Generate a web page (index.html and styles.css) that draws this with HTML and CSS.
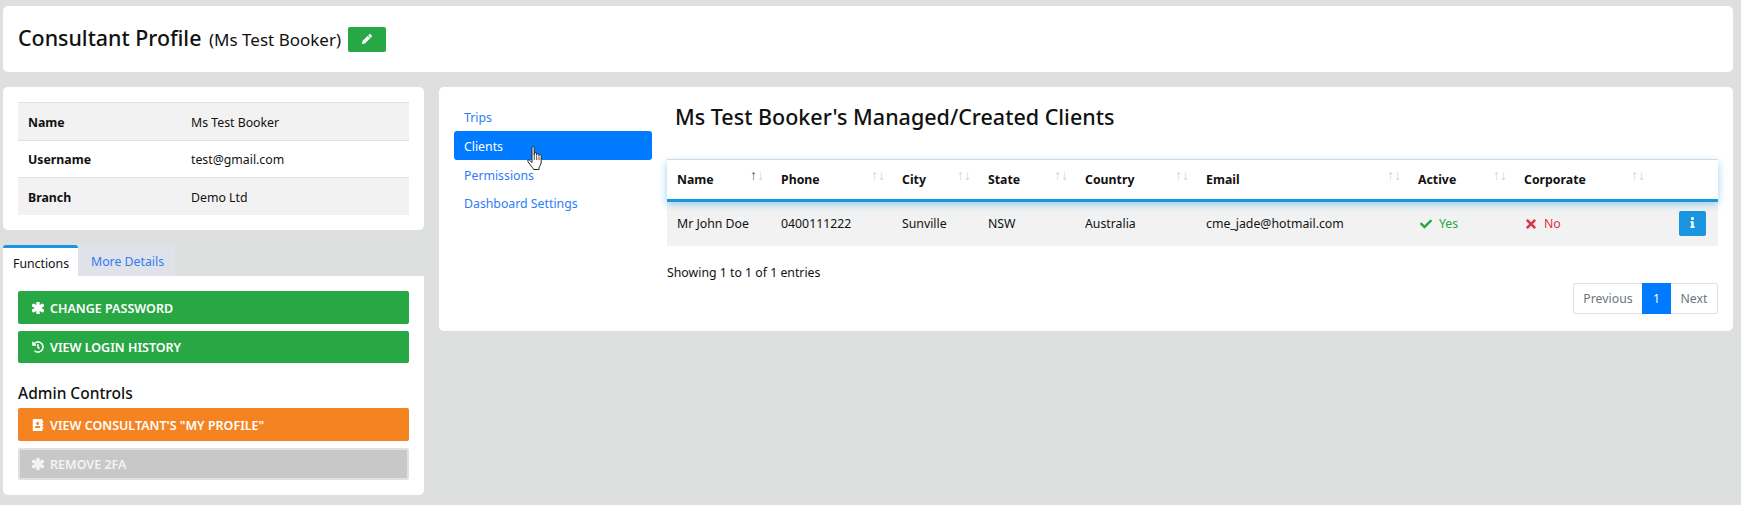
FILE: index.html
```html
<!DOCTYPE html>
<html lang="en">
<head>
<meta charset="utf-8">
<title>Consultant Profile</title>
<link rel="stylesheet" href="styles.css">
</head>
<body>
<svg class="defs" width="0" height="0" aria-hidden="true">
  <symbol id="i-asterisk" viewBox="0 0 512 512"><path d="M478.21 334.093L336 256l142.21-78.093c11.795-6.477 15.961-21.384 9.232-33.037l-19.48-33.741c-6.728-11.653-21.72-15.499-33.227-8.523L296 186.718l3.475-162.204C299.763 11.061 288.937 0 275.48 0h-38.96c-13.456 0-24.283 11.061-23.994 24.514L216 186.718 77.265 102.607c-11.506-6.976-26.499-3.13-33.227 8.523l-19.48 33.741c-6.728 11.653-2.562 26.56 9.233 33.037L176 256 33.79 334.093c-11.795 6.477-15.961 21.384-9.232 33.037l19.48 33.741c6.728 11.653 21.721 15.499 33.227 8.523L216 325.282l-3.475 162.204C212.237 500.939 223.064 512 236.52 512h38.961c13.456 0 24.283-11.061 23.995-24.514L296 325.282l138.735 84.111c11.506 6.976 26.499 3.13 33.227-8.523l19.48-33.741c6.728-11.653 2.563-26.559-9.232-33.036z"/></symbol>
  <symbol id="i-history" viewBox="0 0 512 512"><path d="M504 255.531c.253 136.64-111.18 248.372-247.82 248.468-59.015.042-113.223-20.53-155.822-54.911-11.077-8.94-11.905-25.541-1.839-35.607l11.267-11.267c8.609-8.609 22.353-9.551 31.891-1.984C173.062 425.135 212.781 440 256 440c101.705 0 184-82.311 184-184 0-101.705-82.311-184-184-184-48.814 0-93.149 18.969-126.068 49.932l50.754 50.754c10.08 10.08 2.941 27.314-11.313 27.314H24c-8.837 0-16-7.163-16-16V38.627c0-14.254 17.234-21.393 27.314-11.314l49.372 49.372C129.209 34.136 189.552 8 256 8c136.81 0 247.747 110.78 248 247.531zm-180.912 78.784l9.823-12.63c8.138-10.463 6.253-25.542-4.21-33.679L288 256.349V152c0-13.255-10.745-24-24-24h-16c-13.255 0-24 10.745-24 24v135.651l65.409 50.874c10.463 8.137 25.541 6.253 33.679-4.21z"/></symbol>
  <symbol id="i-book" viewBox="0 0 448 512"><path d="M436 160c6.600 0 12-5.400 12-12v-40c0-6.600-5.400-12-12-12h-20V48c0-26.500-21.500-48-48-48H48C21.500 0 0 21.500 0 48v416c0 26.500 21.500 48 48 48h320c26.500 0 48-21.500 48-48v-48h20c6.600 0 12-5.400 12-12v-40c0-6.600-5.400-12-12-12h-20v-64h20c6.600 0 12-5.400 12-12v-40c0-6.600-5.400-12-12-12h-20v-64h20zm-228-32c35.300 0 64 28.700 64 64s-28.700 64-64 64-64-28.700-64-64 28.700-64 64-64zm112 236.800c0 10.600-10 19.200-22.400 19.200H118.400C106 384 96 375.400 96 364.800v-19.200c0-31.800 30.100-57.600 67.200-57.600h5c12.300 5.100 25.700 8 39.800 8s27.600-2.900 39.800-8h5c37.100 0 67.200 25.800 67.200 57.600v19.200z"/></symbol>
  <symbol id="i-pencil" viewBox="0 0 512 512"><path d="M497.900 142.100l-46.100 46.100c-4.700 4.700-12.300 4.700-17 0l-111-111c-4.700-4.700-4.700-12.300 0-17l46.100-46.100c18.700-18.700 49.100-18.700 67.900 0l60.100 60.100c18.800 18.700 18.800 49.100 0 67.900zM284.200 99.800L21.600 362.400.4 483.900c-2.900 16.400 11.400 30.600 27.800 27.800l121.500-21.300 262.600-262.600c4.700-4.700 4.700-12.300 0-17l-111-111c-4.800-4.700-12.400-4.700-17.100 0z"/></symbol>
  <symbol id="i-check" viewBox="0 0 512 512"><path d="M173.898 439.404l-166.4-166.4c-9.997-9.997-9.997-26.206 0-36.204l36.203-36.204c9.997-9.998 26.207-9.998 36.204 0L192 312.69 432.095 72.596c9.997-9.997 26.207-9.997 36.204 0l36.203 36.204c9.997 9.997 9.997 26.206 0 36.204l-294.4 294.401c-9.998 9.997-26.207 9.997-36.204-.001z"/></symbol>
  <symbol id="i-times" viewBox="0 0 352 512"><path d="M242.72 256l100.07-100.07c12.28-12.28 12.28-32.19 0-44.48l-22.24-22.24c-12.28-12.28-32.19-12.28-44.48 0L176 189.28 75.93 89.21c-12.28-12.28-32.19-12.28-44.48 0L9.21 111.45c-12.28 12.28-12.28 32.19 0 44.48L109.28 256 9.21 356.07c-12.28 12.28-12.28 32.19 0 44.48l22.24 22.24c12.28 12.28 32.2 12.28 44.48 0L176 322.72l100.07 100.07c12.28 12.28 32.2 12.28 44.48 0l22.24-22.24c12.28-12.28 12.28-32.19 0-44.48L242.72 256z"/></symbol>
  <symbol id="i-info" viewBox="0 0 192 512"><path d="M20 424.229h20V279.771H20c-11.046 0-20-8.954-20-20V212c0-11.046 8.954-20 20-20h112c11.046 0 20 8.954 20 20v212.229h20c11.046 0 20 8.954 20 20V492c0 11.046-8.954 20-20 20H20c-11.046 0-20-8.954-20-20v-47.771c0-11.046 8.954-20 20-20zM96 0C56.235 0 24 32.235 24 72s32.235 72 72 72 72-32.235 72-72S135.764 0 96 0z"/></symbol>
</svg>

<header class="card page-head">
  <h1 class="page-title">Consultant Profile <small class="page-sub">(Ms Test Booker)</small></h1>
  <a class="btn-edit" href="#"><svg class="ic ic-edit"><use href="#i-pencil"/></svg></a>
</header>

<div class="layout">
  <aside class="left">
    <section class="card info-card">
      <table class="info-table">
        <tr><th>Name</th><td>Ms Test Booker</td></tr>
        <tr><th>Username</th><td>test@gmail.com</td></tr>
        <tr><th>Branch</th><td>Demo Ltd</td></tr>
      </table>
    </section>
    <div class="tabs">
      <a class="tab tab-active" href="#">Functions</a>
      <a class="tab" href="#">More Details</a>
    </div>
    <section class="tab-body">
      <a class="action green" href="#"><svg class="ic ic-act ic-bold"><use href="#i-asterisk"/></svg><span class="action-label">CHANGE PASSWORD</span></a>
      <a class="action green" href="#"><svg class="ic ic-act"><use href="#i-history"/></svg><span class="action-label">VIEW LOGIN HISTORY</span></a>
      <h2 class="admin-head">Admin Controls</h2>
      <a class="action orange" href="#"><svg class="ic ic-act"><use href="#i-book"/></svg><span class="action-label">VIEW CONSULTANT'S "MY PROFILE"</span></a>
      <a class="action grey" href="#"><svg class="ic ic-act ic-bold"><use href="#i-asterisk"/></svg><span class="action-label">REMOVE 2FA</span></a>
    </section>
  </aside>

  <main class="card main-card">
    <nav class="side-nav">
      <a class="nav-link" href="#">Trips</a>
      <a class="nav-link nav-active" href="#">Clients</a>
      <a class="nav-link" href="#">Permissions</a>
      <a class="nav-link nav-last" href="#">Dashboard Settings</a>
      <svg class="cursor" viewBox="0 0 18 25"><path d="M5 1.600c0-1.300 2.200-1.300 2.200 0v7.300l.2-1.500c.2-1.100 2.200-1 2.200.2v1.500l.2-1c.3-1 2.100-.8 2.100.4v1.200l.3-.7c.4-.8 2-.6 2 .6v6.200c0 1.700-.5 2.700-1.200 3.800-.6 1-1 1.700-1 3.900H6.500c-.5-1.500-1.800-2.800-3-4.300L.9 15.600c-.8-1.300.7-2.300 1.800-1.300l2.300 2.300z" fill="#fff" stroke="#222" stroke-width="1"/><path d="M7.300 9v5M9.700 9.300V14M12 10.500V14" stroke="#222" stroke-width=".8" fill="none"/></svg>
    </nav>
    <div class="content">
      <h2 class="content-title">Ms Test Booker's Managed/Created Clients</h2>
      <table class="clients">
        <colgroup>
          <col class="c-name"><col class="c-phone"><col class="c-city"><col class="c-state"><col class="c-country"><col class="c-email"><col class="c-active"><col class="c-corp"><col class="c-act">
        </colgroup>
        <thead>
          <tr>
            <th class="sort sort-up">Name</th>
            <th class="sort">Phone</th>
            <th class="sort">City</th>
            <th class="sort">State</th>
            <th class="sort">Country</th>
            <th class="sort">Email</th>
            <th class="sort">Active</th>
            <th class="sort">Corporate</th>
            <th></th>
          </tr>
        </thead>
        <tbody>
          <tr>
            <td>Mr John Doe</td>
            <td>0400111222</td>
            <td>Sunville</td>
            <td>NSW</td>
            <td>Australia</td>
            <td>cme_jade@hotmail.com</td>
            <td class="yes"><svg class="ic ic-state"><use href="#i-check"/></svg>Yes</td>
            <td class="no"><svg class="ic ic-state ic-x"><use href="#i-times"/></svg>No</td>
            <td class="cell-btn"><a class="btn-info" href="#"><svg class="ic ic-info"><use href="#i-info"/></svg></a></td>
          </tr>
        </tbody>
      </table>
      <p class="entries">Showing 1 to 1 of 1 entries</p>
      <div class="pager">
        <a class="page pg-prev" href="#">Previous</a>
        <a class="page pg-cur" href="#">1</a>
        <a class="page pg-next" href="#">Next</a>
      </div>
    </div>
  </main>
</div>
</body>
</html>
```
FILE: styles.css
```css
* { box-sizing: border-box; }
html, body { margin: 0; padding: 0; }
body {
  width: 1741px;
  height: 505px;
  overflow: hidden;
  background: #dee0e0;
  color: #111;
  font-family: "Noto Sans", "Open Sans", sans-serif;
  font-size: 12.3px;
  padding: 6px 8px 0 3px;
}
a { text-decoration: none; }
.defs { position: absolute; }
.ic { fill: currentColor; display: inline-block; flex: none; }
.card { background: #fff; border-radius: 5px; }

.page-head {
  height: 66px;
  display: flex;
  align-items: center;
  padding: 0 15px;
  margin-bottom: 15px;
}
.page-title { margin: 0; font-size: 21.4px; font-weight: 500; line-height: 30px; color: #111; }
.page-sub { font-size: 17px; font-weight: 400; margin-left: 2px; }
.btn-edit {
  width: 38px; height: 25px; margin-left: 7px;
  background: #28a745; color: #fff; border-radius: 2px;
  display: flex; align-items: center; justify-content: center;
}
.ic-edit { width: 10px; height: 10px; }

.layout { display: flex; gap: 15px; align-items: flex-start; }
.left { width: 421px; }
.info-card { padding: 15px; height: 143px; margin-bottom: 15px; }
.info-table { width: 100%; border-collapse: collapse; border-top: 1px solid #dee2e6; }
.info-table tr { height: 37.500px; border-top: 1px solid #dee2e6; }
.info-table tr:nth-child(odd) { background: #f2f2f2; }
.info-table th { width: 173px; text-align: left; padding: 2px 10px 0; font-weight: 700; }
.info-table td { padding: 2px 0 0; }

.tabs { display: flex; height: 31px; }
.tab {
  padding: 7px 13px 0; color: #2f7cf6; background: #dfe2e8; white-space: nowrap;
  border-radius: 3px 3px 0 0; width: 97px; line-height: 20px;
}
.tab-active {
  width: 75px; background: #fff; color: #111;
  border-top: 3px solid #1a96e0; padding: 6px 10px 0; line-height: 20px;
}
.tab-body {
  background: #fff; border-radius: 0 0 5px 5px;
  height: 219px; padding: 15px;
}
.action {
  display: flex; align-items: center;
  height: 33px; margin-bottom: 7px; padding-left: 14px;
  border-radius: 2px; color: #fff; font-weight: 600; font-size: 12.5px;
}
.action:nth-child(2) { height: 32px; }
.action-label { padding-top: 1px; }
.ic-act { width: 12px; height: 12px; margin-right: 6px; }
.ic-bold { stroke: currentColor; stroke-width: 60px; overflow: visible; }
.green { background: #28a745; }
.orange { background: #f68321; }
.grey { background: #c8c8c8; border: 2px solid #dee2e6; padding-left: 12px; color: #f4f4f4; height: 32px; margin-bottom: 0; }
.admin-head { margin: 18px 0 3px; font-size: 15.5px; font-weight: 500; line-height: 24px; color: #111; }

.main-card {
  width: 1294px; height: 244px;
  display: flex; padding: 15px 15px 0;
}
.side-nav { width: 198px; position: relative; flex: none; display: flex; flex-direction: column; }
.nav-link {
  height: 29px; line-height: 31px; padding-left: 10px; color: #2f7cf6; border-radius: 3px;
}
.nav-last { line-height: 29px; }
.nav-active { background: #007bff; color: #fff; }
.cursor { position: absolute; left: 73px; top: 44px; width: 18px; height: 25px; }

.content { margin-left: 15px; flex: 1; min-width: 0; }
.content-title { margin: 0 0 0 8px; font-size: 21.5px; font-weight: 500; line-height: 30px; color: #111; height: 57px; }
.clients { width: 1051px; table-layout: fixed; border-collapse: collapse; }
.c-name { width: 104px; } .c-phone { width: 121px; } .c-city { width: 86px; } .c-state { width: 97px; }
.c-country { width: 121px; } .c-email { width: 212px; } .c-active { width: 106px; } .c-corp { width: 138px; } .c-act { width: 66px; }
.clients thead tr {
  height: 41px;
  border-top: 1px solid #dee2e6;
  border-bottom: 3px solid #1a96e0;
  box-shadow: 0 3px 8px rgba(26, 150, 224, .45);
  position: relative;
}
.clients th { padding: 0 10px; text-align: left; font-weight: 700; position: relative; }
.sort::before, .sort::after {
  position: absolute; top: 7px; font-weight: 400; font-size: 14px; line-height: 16px; opacity: .2; color: #111;
  font-family: "Liberation Sans", sans-serif;
}
.sort::before { content: "\2191"; right: 14px; }
.sort::after { content: "\2193"; right: 7px; }
.sort-up::before { opacity: .7; }
.clients tbody tr { height: 45px; background: #f2f2f2; }
.clients td { padding: 0 10px; white-space: nowrap; }
.yes { color: #28a745; }
.no { color: #dc3545; }
.ic-state { width: 12px; height: 12px; margin-right: 7px; vertical-align: -2px; margin-left: 2px; }
.ic-x { width: 10px; height: 14px; margin-left: 2px; margin-right: 8px; vertical-align: -3px; }
.cell-btn { text-align: right; }
.btn-info {
  display: inline-flex; width: 27px; height: 25px; background: #1a96e0; color: #fff;
  border-radius: 2px; align-items: center; justify-content: center; margin-right: 2px; vertical-align: middle;
}
.ic-info { width: 5px; height: 11px; margin-top: -3px; }
.entries { margin: 17px 0 0; line-height: 20px; }
.pager { display: flex; justify-content: flex-end; }
.page { height: 31px; line-height: 29px; border: 1px solid #dee2e6; color: #6c757d; text-align: center; }
.pg-prev { width: 69px; border-right: 0; border-radius: 3px 0 0 3px; }
.pg-cur { width: 29px; background: #007bff; border-color: #007bff; color: #fff; }
.pg-next { width: 47px; border-left: 0; border-radius: 0 3px 3px 0; }
```
